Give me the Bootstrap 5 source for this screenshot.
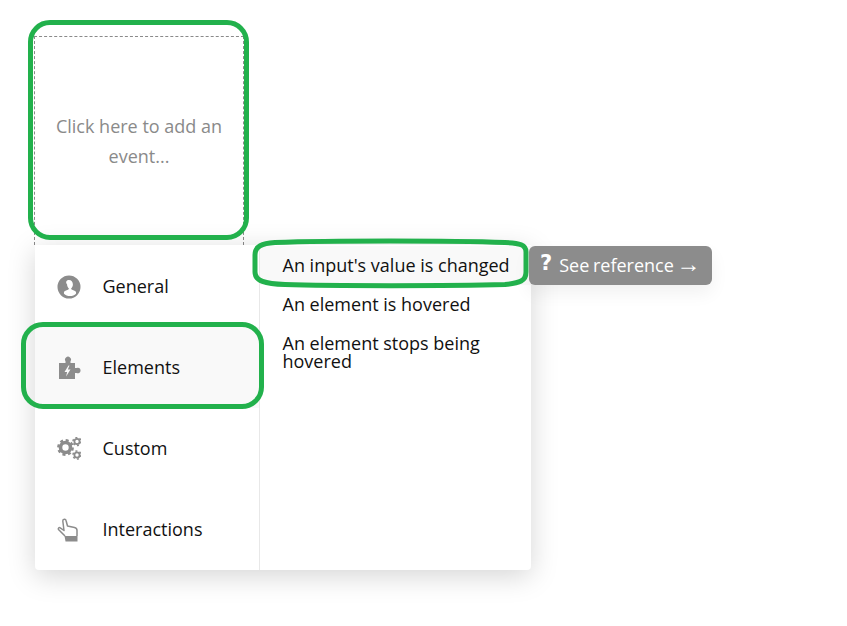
<!DOCTYPE html>
<html lang="en">
<head>
<meta charset="UTF-8">
<meta name="viewport" content="width=device-width, initial-scale=1.0">
<title>Add an event</title>
<link href="https://cdn.jsdelivr.net/npm/bootstrap@5.3.0/dist/css/bootstrap.min.css" rel="stylesheet">
<style>
body { font-family: "Open Sans", sans-serif; font-size: 18px; color: #111; background: #fff; }
.stage { position: relative; width: 847px; height: 626px; padding: 36px 0 0 34px; overflow: hidden; }
.event-slot { width: 210px; height: 209px; border: 1px dashed #8a8a8a; border-bottom: 0; color: #8a8a8a; text-align: center; line-height: 30px; padding: 0 12px 1px; }
.event-menu { width: 496px; height: 325px; margin-left: 1px; padding-top: 1px; background: #fff; border-radius: 0 0 4px 4px; box-shadow: 0 6px 28px rgba(0,0,0,.17); }
.cat-col { width: 225px; border-right: 1px solid #e8e8e8; }
.cat-row { height: 81px; padding-left: 22px; gap: 21.5px; }
.cat-row.is-on { background: #f9f9f9; }
.cat-icon { width: 24px; height: 24px; fill: #8c8c8c; flex: none; }
.ev-col { flex: 1; min-width: 0; }
.ev-row { padding: 10px 12px 10px 22.5px; line-height: 18px; min-height: 39px; }
.ev-row.is-on { background: #f9f9f9; }
.ref-btn { position: absolute; left: 529px; top: 246px; width: 183px; height: 39px; background: #8c8c8c; color: #fff; border-radius: 6px; padding-left: 11px; gap: 7px; box-shadow: 0 8px 18px rgba(0,0,0,.06); }
.ref-q { font-family: "DejaVu Sans", sans-serif; font-weight: 700; font-size: 21px; line-height: 1; margin-top: -5px; }
.ref-label { word-spacing: -1px; }
.ref-arrow { font-family: "Liberation Sans", sans-serif; font-size: 24px; line-height: 1; margin-left: -1px; }
.mark-ring { position: absolute; border: 5px solid #22b14c; pointer-events: none; }
.ring-a { left: 28px; top: 20px; width: 221px; height: 220px; border-radius: 22px; }
.ring-b { left: 21px; top: 322px; width: 243px; height: 87px; border-radius: 22px; }
.ring-c { position: absolute; left: 0; top: 0; pointer-events: none; }
</style>
</head>
<body>
<div class="stage">
    <div class="event-slot d-flex align-items-center justify-content-center">
        <span>Click here to add an event...</span>
    </div>
    <div class="event-menu d-flex">
        <div class="cat-col">
            <div class="cat-row d-flex align-items-center">
                <svg class="cat-icon" viewBox="0 0 24 24"><path fill-rule="evenodd" d="M12 .5a11.500 11.500 0 1 0 0 23 11.500 11.500 0 0 0 0-23zM12 5c2.300 0 3.900 1.900 3.900 4.400 0 1.700-.8 3.100-1.800 4 0 .6.300 1 1 1.300 1.700.7 3.400 1.200 3.900 2.300.1.700.1 1.200 0 1.800-1.500 1.500-3.600 2.300-6 2.300s-4.500-.8-6-2.300c-.1-.6-.1-1.100 0-1.800.5-1.100 2.200-1.600 3.900-2.300.7-.3 1-.7 1-1.300-1-.9-1.800-2.300-1.800-4C8.100 6.900 9.700 5 12 5z"/></svg>
                <span>General</span>
            </div>
            <div class="cat-row is-on d-flex align-items-center">
                <svg class="cat-icon" viewBox="0 0 24 24"><path fill-rule="evenodd" d="M2 7h6.500V5.300a3 3 0 1 1 5 0V7H18v5h1.500a2.800 2.800 0 1 1 0 5H18v6H2zM11.500 9.500l-4 6.500h2.600l-1 4.500 4.400-7h-2.700l1.700-4z"/></svg>
                <span>Elements</span>
            </div>
            <div class="cat-row d-flex align-items-center">
                <svg class="cat-icon" viewBox="0 0 24 24"><g fill="none" stroke="#8c8c8c"><circle cx="8.500" cy="10.500" r="5" stroke-width="3.600"/><circle cx="8.500" cy="10.500" r="7.200" stroke-width="2.400" stroke-dasharray="3 2.650"/><circle cx="20" cy="4.500" r="2.600" stroke-width="1.800"/><circle cx="20" cy="4.500" r="4" stroke-width="1.500" stroke-dasharray="2 2.190"/><circle cx="20" cy="18" r="2.600" stroke-width="1.800"/><circle cx="20" cy="18" r="4" stroke-width="1.500" stroke-dasharray="2 2.190"/></g></svg>
                <span>Custom</span>
            </div>
            <div class="cat-row d-flex align-items-center">
                <svg class="cat-icon" viewBox="0 0 24 24"><path fill="none" stroke="#8c8c8c" stroke-width="1.500" stroke-linejoin="round" d="M8 18 1.500 11.500c-.7-1 .5-2.400 1.700-1.700L7 12.500 5.800 3c-.1-2 2.900-2.300 3.300-.3L10.500 8l7 1.500c1.700.4 2.500 1.400 2.500 3V18"/><path d="M7.500 18H20.500V23.500H8.500z"/></svg>
                <span>Interactions</span>
            </div>
        </div>
        <div class="ev-col">
            <div class="ev-row is-on">An input's value is changed</div>
            <div class="ev-row">An element is hovered</div>
            <div class="ev-row">An element stops being hovered</div>
        </div>
    </div>
    <div class="ref-btn d-flex align-items-center">
        <span class="ref-q">?</span>
        <span class="ref-label">See reference <span class="ref-arrow">→</span></span>
    </div>
    <div class="mark-ring ring-a"></div>
    <div class="mark-ring ring-b"></div>
    <svg class="ring-c" width="847" height="626" fill="none" stroke="#22b14c" stroke-width="5"><path d="M255 255C255 246 262 243.500 275 242.500 330 240.500 450 240.500 505 242.500 520 243 526 245 526 252V272C526 281 520 283 505 284.500 450 286 330 286 285 284.500 265 284 255 281 255 272Z"/></svg>
</div>
<script src="https://cdn.jsdelivr.net/npm/bootstrap@5.3.0/dist/js/bootstrap.bundle.min.js"></script>
</body>
</html>
